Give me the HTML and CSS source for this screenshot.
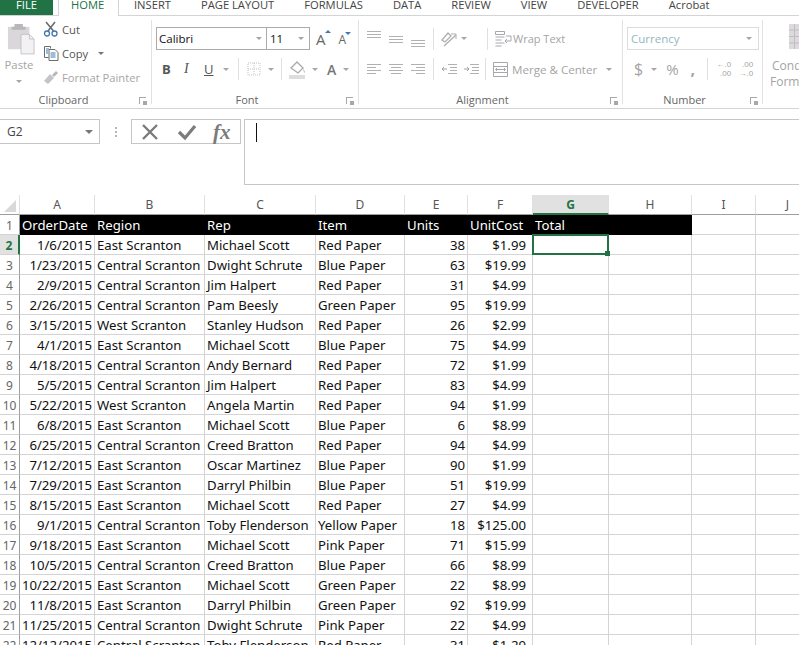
FILE: index.html
```html
<!DOCTYPE html>
<html lang="en">
<head>
<meta charset="utf-8">
<title>Excel</title>
<link rel="stylesheet" href="styles.css">
</head>
<body>
<div class="app">
  <nav class="tabs">
    <span class="tab-file">FILE</span>
    <span class="tab tab-home">HOME</span>
    <span class="tab">INSERT</span>
    <span class="tab">PAGE LAYOUT</span>
    <span class="tab">FORMULAS</span>
    <span class="tab">DATA</span>
    <span class="tab">REVIEW</span>
    <span class="tab">VIEW</span>
    <span class="tab">DEVELOPER</span>
    <span class="tab">Acrobat</span>
  </nav>

  <section class="ribbon">
    <div class="group g-clip">
      <div class="group-body clip-body">
        <div class="paste">
          <svg width="28" height="32" viewBox="0 0 30 34"><path d="M1 4h23v24H1z" fill="#d9d7d9"/><path d="M8 4V1h9v3h3v3H5V4z" fill="#b9b7b9"/><path d="M15 12h9l5 5v16H15z" fill="#f4f1f5" stroke="#c4c2c6"/><path d="M24 12v5h5" fill="none" stroke="#c4c2c6"/></svg>
          <span class="paste-label">Paste</span>
          <i class="caret paste-caret"></i>
        </div>
        <div class="clip-list">
          <div class="clip-item">
            <svg width="16" height="16" viewBox="0 0 16 16"><path d="M3 1l7.500 9M12 1L5 10" stroke="#6d6b6d" stroke-width="1.600" fill="none"/><circle cx="4" cy="12.500" r="2.500" fill="none" stroke="#3f78b5" stroke-width="1.300"/><circle cx="11.500" cy="12.500" r="2.500" fill="none" stroke="#3f78b5" stroke-width="1.300"/></svg>
            <span>Cut</span>
          </div>
          <div class="clip-item">
            <svg width="16" height="16" viewBox="0 0 16 16"><path d="M1.500 1.500h6v2M1.500 1.500v11h4" fill="none" stroke="#6b6b6b"/><path d="M6 4.500h6l3 3v8H6z" fill="#fff" stroke="#6b6b6b"/><path d="M7.500 8h5M7.500 10h5M7.500 12h5" stroke="#3f78b5"/><path d="M3 4h3M3 6h2M3 8h2" stroke="#3f78b5"/></svg>
            <span>Copy</span><i class="caret copy-caret"></i>
          </div>
          <div class="clip-item disabled">
            <svg width="16" height="16" viewBox="0 0 16 16"><path d="M9 6l4-4 2 2-4 4z" fill="#b7b7b7"/><path d="M1 12l6-7 4 4-6 6z" fill="#c4c4c4"/></svg>
            <span>Format Painter</span>
          </div>
        </div>
      </div>
      <div class="group-label label-clip"><span>Clipboard</span><i class="launcher"></i></div>
    </div>

    <div class="group g-font">
      <div class="group-body stack">
        <div class="row font-top">
          <div class="select font-name"><span>Calibri</span><i class="caret"></i></div>
          <div class="select font-size"><span>11</span><i class="caret"></i></div>
          <span class="grow-a">A<i class="mini-up"></i></span>
          <span class="shrink-a">A<i class="mini-down"></i></span>
        </div>
        <div class="row font-bottom">
          <b class="fmt fmt-b">B</b>
          <i class="fmt fmt-i">I</i>
          <u class="fmt fmt-u">U</u>
          <i class="caret caret-u"></i>
          <span class="sep sep-u"></span>
          <svg width="14" height="14" viewBox="0 0 14 14"><path d="M1 1h12v12H1z" fill="none" stroke="#c3c1c5" stroke-dasharray="1 1"/><path d="M7 1v12M1 7h12" stroke="#c3c1c5" stroke-dasharray="1 1"/></svg>
          <i class="caret caret-b"></i>
          <span class="sep sep-b"></span>
          <svg width="17" height="19" viewBox="0 0 17 19"><path d="M2 8l6-6 6 6-5 5z" fill="#fff" stroke="#a9a9a9" stroke-width="1.300"/><path d="M14 8l2 4-1 1z" fill="#b5b5b5"/><path d="M0 15h16v4H0z" fill="#dddddd"/></svg>
          <i class="caret caret-f"></i>
          <span class="font-color">A</span>
          <i class="caret caret-c"></i>
        </div>
      </div>
      <div class="group-label label-16"><span>Font</span><i class="launcher"></i></div>
    </div>

    <div class="group g-align">
      <div class="group-body stack">
        <div class="row align-top">
          <svg class="lines" width="14" height="16" viewBox="0 0 14 16"><path d="M0 .5h14M0 3.500h14M0 6.500h14" stroke="#b1b1b1"/></svg>
          <svg class="lines" width="14" height="16" viewBox="0 0 14 16"><path d="M0 5.500h14M0 8.500h14M0 11.500h14" stroke="#b1b1b1"/></svg>
          <svg class="lines" width="14" height="16" viewBox="0 0 14 16"><path d="M0 9.500h14M0 12.500h14M0 15.500h14" stroke="#b1b1b1"/></svg>
          <span class="sep sep-align"></span>
          <svg width="17" height="16" viewBox="0 0 17 16"><path d="M1 9l6-7 3 3-6 6zM3 15L15 4" fill="none" stroke="#b0aeb0" stroke-width="1.300"/><path d="M15 3v5M15 3h-5" fill="none" stroke="#b0aeb0"/></svg>
          <i class="caret orient-caret"></i>
          <span class="sep sep-wrap"></span>
          <svg width="17" height="16" viewBox="0 0 17 16"><path d="M.5.500h9v3h-9zM.5 6h9M.5 9h6M.5 12h9M.5 15h6" fill="none" stroke="#a9a7ab"/><path d="M11 5h5v5h-6M12 8l-2 2 2 2" fill="none" stroke="#a9a7ab"/></svg>
          <span class="wide-label wrap-label">Wrap Text</span>
        </div>
        <div class="row align-bottom">
          <svg class="lines" width="14" height="11" viewBox="0 0 14 11"><path d="M0 .5h14M0 3.500h9M0 6.500h14M0 9.500h9" stroke="#b1b1b1"/></svg>
          <svg class="lines" width="14" height="11" viewBox="0 0 14 11"><path d="M0 .5h14M2 3.500h10M0 6.500h14M2 9.500h10" stroke="#b1b1b1"/></svg>
          <svg class="lines" width="14" height="11" viewBox="0 0 14 11"><path d="M0 .5h14M5 3.500h9M0 6.500h14M5 9.500h9" stroke="#b1b1b1"/></svg>
          <span class="sep sep-align"></span>
          <svg width="16" height="11" viewBox="0 0 16 11"><path d="M7 .5h9M9 3.500h7M9 6.500h7M7 9.500h9" stroke="#b1b1b1"/><path d="M6 5H1M3 3L1 5l2 2" fill="none" stroke="#a3a1a3"/></svg>
          <svg class="indent" width="16" height="11" viewBox="0 0 16 11"><path d="M7 .5h9M9 3.500h7M9 6.500h7M7 9.500h9" stroke="#b1b1b1"/><path d="M1 5h5M4 3l2 2-2 2" fill="none" stroke="#a3a1a3"/></svg>
          <span class="sep sep-merge"></span>
          <svg width="15" height="15" viewBox="0 0 15 15"><path d="M.5.500h14v14H.5zM.5 4.500h14M.5 10.500h14M3 7.500h9M4 6L2.500 7.500 4 9M11 6l1.500 1.500L11 9" fill="none" stroke="#a9a7ab"/></svg>
          <span class="wide-label">Merge &amp; Center</span>
          <i class="caret merge-caret"></i>
        </div>
      </div>
      <div class="group-label label-16"><span>Alignment</span><i class="launcher"></i></div>
    </div>

    <div class="group g-number">
      <div class="group-body stack">
        <div class="row num-top">
          <div class="select currency"><span>Currency</span><i class="caret"></i></div>
        </div>
        <div class="row num-bottom">
          <span class="num-sym dollar">$</span>
          <i class="caret"></i>
          <span class="num-sym percent">%</span>
          <span class="num-sym comma">,</span>
          <span class="sep"></span>
          <span class="dec dec-l">←.0<br>.00</span>
          <span class="dec dec-r">.00<br>→.0</span>
        </div>
      </div>
      <div class="group-label label-16"><span>Number</span><i class="launcher"></i></div>
    </div>

    <div class="group g-styles">
      <svg class="cond-icon" width="16" height="25" viewBox="0 0 16 25"><path d="M0 0h16v25H0z" fill="#dcdadc"/><path d="M5.500 0v25M10.500 0v25M0 6h16M0 12.500h16M0 19h16" stroke="#c0bec0"/></svg>
      <span class="cond-text">Cond<br>Forma</span>
    </div>
  </section>

  <section class="formula-bar">
    <div class="name-box"><span>G2</span><i class="caret"></i></div>
    <span class="grip"></span>
    <div class="fx-box">
      <svg width="18" height="18" viewBox="0 0 18 18"><path d="M2 2l14 14M16 2L2 16" stroke="#7b7b7b" stroke-width="2.400"/></svg>
      <svg width="20" height="18" viewBox="0 0 20 18"><path d="M2 9l6 6L18 3" fill="none" stroke="#7b7b7b" stroke-width="3.200"/></svg>
      <span class="fx">fx</span>
    </div>
    <div class="formula-input"><span class="cursor"></span></div>
  </section>

  <section class="sheet">
    <div class="gr head">
      <div class="corner"><i></i></div>
      <div>A</div><div>B</div><div>C</div><div>D</div><div>E</div><div>F</div><div class="col-sel">G</div><div>H</div><div>I</div><div>J</div>
    </div>
    <div class="gr hdr-row">
      <div class="rn">1</div>
      <div class="h">OrderDate</div><div class="h">Region</div><div class="h">Rep</div><div class="h">Item</div><div class="h">Units</div><div class="h">UnitCost</div><div class="h">Total</div><div class="h"></div><div></div><div></div>
    </div>
    <div class="gr"><div class="rn rn-sel">2</div><div class="r">1/6/2015</div><div>East Scranton</div><div>Michael Scott</div><div>Red Paper</div><div class="r">38</div><div class="r">$1.99</div><div class="active"><i class="fill-handle"></i></div><div></div><div></div><div></div></div>
    <div class="gr"><div class="rn">3</div><div class="r">1/23/2015</div><div>Central Scranton</div><div>Dwight Schrute</div><div>Blue Paper</div><div class="r">63</div><div class="r">$19.99</div><div></div><div></div><div></div><div></div></div>
    <div class="gr"><div class="rn">4</div><div class="r">2/9/2015</div><div>Central Scranton</div><div>Jim Halpert</div><div>Red Paper</div><div class="r">31</div><div class="r">$4.99</div><div></div><div></div><div></div><div></div></div>
    <div class="gr"><div class="rn">5</div><div class="r">2/26/2015</div><div>Central Scranton</div><div>Pam Beesly</div><div>Green Paper</div><div class="r">95</div><div class="r">$19.99</div><div></div><div></div><div></div><div></div></div>
    <div class="gr"><div class="rn">6</div><div class="r">3/15/2015</div><div>West Scranton</div><div>Stanley Hudson</div><div>Red Paper</div><div class="r">26</div><div class="r">$2.99</div><div></div><div></div><div></div><div></div></div>
    <div class="gr"><div class="rn">7</div><div class="r">4/1/2015</div><div>East Scranton</div><div>Michael Scott</div><div>Blue Paper</div><div class="r">75</div><div class="r">$4.99</div><div></div><div></div><div></div><div></div></div>
    <div class="gr"><div class="rn">8</div><div class="r">4/18/2015</div><div>Central Scranton</div><div>Andy Bernard</div><div>Red Paper</div><div class="r">72</div><div class="r">$1.99</div><div></div><div></div><div></div><div></div></div>
    <div class="gr"><div class="rn">9</div><div class="r">5/5/2015</div><div>Central Scranton</div><div>Jim Halpert</div><div>Red Paper</div><div class="r">83</div><div class="r">$4.99</div><div></div><div></div><div></div><div></div></div>
    <div class="gr"><div class="rn">10</div><div class="r">5/22/2015</div><div>West Scranton</div><div>Angela Martin</div><div>Red Paper</div><div class="r">94</div><div class="r">$1.99</div><div></div><div></div><div></div><div></div></div>
    <div class="gr"><div class="rn">11</div><div class="r">6/8/2015</div><div>East Scranton</div><div>Michael Scott</div><div>Blue Paper</div><div class="r">6</div><div class="r">$8.99</div><div></div><div></div><div></div><div></div></div>
    <div class="gr"><div class="rn">12</div><div class="r">6/25/2015</div><div>Central Scranton</div><div>Creed Bratton</div><div>Red Paper</div><div class="r">94</div><div class="r">$4.99</div><div></div><div></div><div></div><div></div></div>
    <div class="gr"><div class="rn">13</div><div class="r">7/12/2015</div><div>East Scranton</div><div>Oscar Martinez</div><div>Blue Paper</div><div class="r">90</div><div class="r">$1.99</div><div></div><div></div><div></div><div></div></div>
    <div class="gr"><div class="rn">14</div><div class="r">7/29/2015</div><div>East Scranton</div><div>Darryl Philbin</div><div>Blue Paper</div><div class="r">51</div><div class="r">$19.99</div><div></div><div></div><div></div><div></div></div>
    <div class="gr"><div class="rn">15</div><div class="r">8/15/2015</div><div>East Scranton</div><div>Michael Scott</div><div>Red Paper</div><div class="r">27</div><div class="r">$4.99</div><div></div><div></div><div></div><div></div></div>
    <div class="gr"><div class="rn">16</div><div class="r">9/1/2015</div><div>Central Scranton</div><div>Toby Flenderson</div><div>Yellow Paper</div><div class="r">18</div><div class="r">$125.00</div><div></div><div></div><div></div><div></div></div>
    <div class="gr"><div class="rn">17</div><div class="r">9/18/2015</div><div>East Scranton</div><div>Michael Scott</div><div>Pink Paper</div><div class="r">71</div><div class="r">$15.99</div><div></div><div></div><div></div><div></div></div>
    <div class="gr"><div class="rn">18</div><div class="r">10/5/2015</div><div>Central Scranton</div><div>Creed Bratton</div><div>Blue Paper</div><div class="r">66</div><div class="r">$8.99</div><div></div><div></div><div></div><div></div></div>
    <div class="gr"><div class="rn">19</div><div class="r">10/22/2015</div><div>East Scranton</div><div>Michael Scott</div><div>Green Paper</div><div class="r">22</div><div class="r">$8.99</div><div></div><div></div><div></div><div></div></div>
    <div class="gr"><div class="rn">20</div><div class="r">11/8/2015</div><div>East Scranton</div><div>Darryl Philbin</div><div>Green Paper</div><div class="r">92</div><div class="r">$19.99</div><div></div><div></div><div></div><div></div></div>
    <div class="gr"><div class="rn">21</div><div class="r">11/25/2015</div><div>Central Scranton</div><div>Dwight Schrute</div><div>Pink Paper</div><div class="r">22</div><div class="r">$4.99</div><div></div><div></div><div></div><div></div></div>
    <div class="gr"><div class="rn">22</div><div class="r">12/12/2015</div><div>Central Scranton</div><div>Toby Flenderson</div><div>Red Paper</div><div class="r">31</div><div class="r">$1.29</div><div></div><div></div><div></div><div></div></div>
  </section>
</div>
</body>
</html>
```
FILE: styles.css
```css
* { box-sizing: border-box; }
html, body { margin: 0; padding: 0; height: 100%; overflow: hidden; background: #fff; }
body { font-family: "Open Sans", "Noto Sans", sans-serif; color: #444; }
i { font-style: normal; }
.app { width: 799px; height: 645px; overflow: hidden; display: flex; flex-direction: column; }

/* tabs */
.tabs { flex: none; height: 16px; display: flex; align-items: flex-end; border-bottom: 1px solid #d4d4d4; font-size: 11.2px; white-space: nowrap; color: #444; }
.tab-file { width: 53px; height: 15px; background: #217346; color: #fff; text-align: center; margin-right: 5px; overflow: hidden; line-height: 10px; }
.tab { height: 15px; padding: 0 15px; overflow: hidden; line-height: 10px; }
.tab-home { width: 61px; height: 16px; padding: 0 12px; margin-bottom: -1px; background: #fff; border: solid #d4d4d4; border-width: 0 1px; color: #217346; }

/* ribbon */
.ribbon { flex: none; height: 93px; display: flex; border-bottom: 1px solid #d4d4d4; padding-top: 4px; overflow: hidden; font-size: 11.5px; color: #a4a4a4; }
.group { flex: none; height: 84px; border-right: 1px solid #e2e2e2; display: flex; flex-direction: column; }
.group-body { flex: 1; min-height: 0; }
.group-label { flex: none; height: 11px; line-height: 14px; font-size: 11px; color: #666; text-align: center; position: relative; }
.label-clip { padding-right: 24px; }
.label-16 { padding-right: 16px; }
.launcher { position: absolute; right: 5px; top: 4px; width: 7px; height: 7px; border: 1px solid #a8a8a8; border-width: 1px 0 0 1px; }
.launcher::after { content: ""; position: absolute; right: -1px; bottom: -1px; width: 4px; height: 4px; background: #a8a8a8; }
.g-clip { width: 152px; }
.g-font { width: 207px; }
.g-align { width: 264px; }
.g-number { width: 140px; }
.g-styles { width: 36px; border: 0; padding: 4px 0 0 7px; }

.caret { display: inline-block; flex: none; width: 0; height: 0; border: 3px solid transparent; border-top: 3px solid #a6a6a6; border-bottom: 0; }
.row { display: flex; align-items: center; flex: none; }
.stack { display: flex; flex-direction: column; }
.sep { flex: none; width: 1px; height: 22px; background: #e0e0e0; }
.select { display: flex; align-items: center; justify-content: space-between; height: 23px; border: 1px solid #ababab; padding: 0 4px 0 2px; }

/* clipboard */
.clip-body { display: flex; }
.paste { width: 43px; padding: 3px 0 0 7px; display: flex; flex-direction: column; align-items: flex-start; }
.paste-label { width: 30px; text-align: center; margin-left: -3px; line-height: 20px; font-size: 11.3px; }
.paste-caret { margin: 5px 0 0 9px; }
.clip-list { margin-top: -3px; display: flex; flex-direction: column; }
.clip-item { display: flex; align-items: center; gap: 3px; height: 24px; color: #555; white-space: nowrap; font-size: 11.2px; }
.clip-item.disabled { color: #a6a6a6; }
.copy-caret { margin-left: 7px; border-top-color: #777; }

/* font */
.font-top { padding: 7px 0 0 4px; height: 30px; }
.font-name { width: 111px; color: #111; }
.font-size { width: 44px; margin-left: -1px; padding-left: 3px; padding-right: 5px; color: #111; }
.grow-a, .shrink-a { position: relative; color: #666; }
.grow-a { font-size: 15px; margin-left: 6px; }
.shrink-a { font-size: 12px; margin-left: 13px; margin-top: 2px; }
.mini-up, .mini-down { position: absolute; top: 1px; right: -5px; border: 3px solid transparent; }
.mini-up { border-bottom: 3px solid #3f78b5; border-top: 0; }
.mini-down { border-top: 3px solid #3f78b5; border-bottom: 0; }
.font-bottom { margin-top: 8px; height: 22px; padding-left: 10px; }
.font-bottom .fmt { width: 21px; text-align: left; color: #555; font-size: 13px; text-decoration: none; }
.font-bottom .fmt-i { font-style: italic; font-family: "Liberation Serif", serif; font-size: 14px; padding-left: 1px; }
.font-bottom .fmt-u { text-decoration: underline; width: 19px; }
.sep-u { margin: 0 8px 0 9px; }
.caret-b { margin-left: 7px; }
.sep-b { margin: 0 7px 0 7px; }
.caret-f { margin-left: 6px; }
.font-color { font-size: 14px; font-weight: 600; color: #777; margin: 0 7px 0 9px; }

/* alignment */
.align-top { padding: 7px 0 0 8px; height: 30px; }
.lines + .lines { margin-left: 8px; }
.align-bottom { margin-top: 8px; padding-left: 8px; height: 22px; }
.sep-align { margin: 0 7px 0 8px; }
.orient-caret { margin-left: 3px; }
.sep-wrap { margin: 0 7px 0 20px; }
.sep-merge { margin: 0 7px 0 6px; }
.indent { margin-left: 6px; }
.wide-label { margin-left: 4px; font-size: 11.6px; color: #a4a4a4; white-space: nowrap; }
.wrap-label { margin-left: 1px; font-size: 11px; }
.merge-caret { margin: 1px 0 0 9px; }

/* number */
.num-top { padding: 7px 0 0 4px; height: 30px; }
.currency { width: 132px; border-color: #dcdcdc; color: #94b8bf; padding: 0 6px 0 3px; }
.num-bottom { margin-top: 8px; height: 22px; padding-left: 11px; }
.num-sym { color: #a4a4a4; font-size: 16px; }
.dollar { margin-right: 8px; }
.percent { margin: 0 12px 0 9px; font-size: 15px; }
.comma { font-weight: 700; margin-right: 12px; line-height: 12px; }
.dec { font-family: "Liberation Sans", sans-serif; font-size: 8px; line-height: 9px; color: #a4a4a4; white-space: nowrap; width: 16px; margin-left: 7px; text-align: right; }
.dec-r { margin-left: 6px; }

/* styles */
.cond-icon { margin-left: 19px; display: block; }
.cond-text { display: block; font-size: 12px; line-height: 16px; margin-top: 9px; white-space: nowrap; color: #a4a4a4; text-indent: 2px; }

/* formula bar */
.formula-bar { flex: none; height: 86px; padding-top: 10px; display: flex; align-items: flex-start; }
.name-box { width: 101px; height: 25px; margin-left: -1px; border: 1px solid #c6c6c6; display: flex; align-items: center; justify-content: space-between; padding: 0 6px 0 7px; font-size: 12px; color: #444; }
.name-box .caret { border-top-color: #777; border-width: 4px 4px 0; }
.grip { width: 2px; height: 10px; margin: 8px 14px 0 15px; background: repeating-linear-gradient(#b5b5b5 0 2px, transparent 2px 4px); }
.fx-box { width: 110px; height: 25px; border: 1px solid #c6c6c6; display: flex; align-items: center; padding-left: 9px; gap: 18px; }
.fx { font-family: "Liberation Serif", serif; font-style: italic; font-size: 21px; font-weight: 700; color: #7b7b7b; line-height: 20px; margin-left: -2px; }
.formula-input { flex: 1; height: 66px; margin-left: 3px; border: 1px solid #c6c6c6; border-right: 0; padding: 3px 0 0 11px; }
.cursor { display: block; width: 1px; height: 19px; background: #111; }

/* sheet */
.sheet { flex: 1; font-family: "Noto Sans", sans-serif; font-size: 13.2px; color: #111; }
.gr { display: grid; grid-template-columns: 20px 75px 110px 111px 89px 63px 65px 76px 83px 64px 64px; height: 20px; }
.gr > div { border: solid #d4d4d4; border-width: 0 1px 1px 0; line-height: 21px; padding: 0 2px; white-space: nowrap; overflow: hidden; }
.gr > .r { text-align: right; }
.gr > .r:nth-child(7) { padding-right: 6px; }
.gr > .rn { background: #fff; color: #666; text-align: center; padding: 0; border-right: 1px solid #9e9e9e; font-size: 12px; }
.gr > .rn-sel { background: #e1e1e1; color: #217346; font-weight: 700; border-right: 2px solid #217346; }
.head > div { text-align: center; color: #555; font-size: 12px; padding: 0; line-height: 19px; border-bottom: 1px solid #9e9e9e; border-right-color: #e0e0e0; }
.head > .corner { position: relative; }
.corner i { position: absolute; right: 3px; bottom: 2px; width: 0; height: 0; border: solid transparent; border-width: 0 0 12px 12px; border-bottom-color: #d9d9d9; }
.head > .col-sel { background: #e1e1e1; color: #217346; font-weight: 700; border-bottom: 2px solid #217346; }
.gr > .h { background: #000; color: #fff; border-color: #000; }
.gr > .active { position: relative; overflow: visible; border: 2px solid #217346; margin: -1px 0 0 -1px; height: 21px; width: 77px; }
.fill-handle { position: absolute; right: -3px; bottom: -3px; width: 5px; height: 5px; background: #217346; }
```
